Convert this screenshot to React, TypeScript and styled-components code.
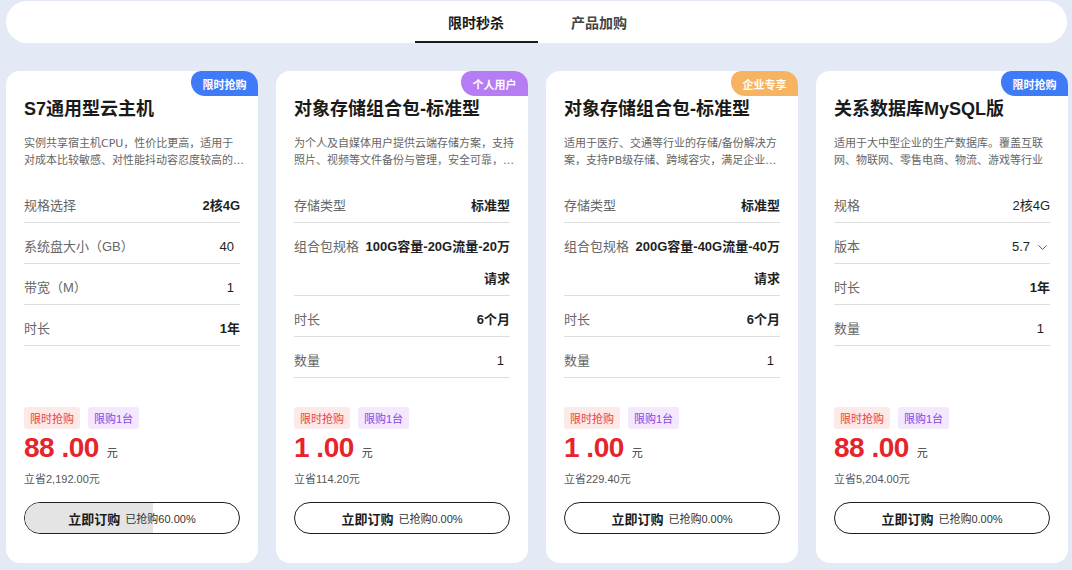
import React, { useState } from 'react'
import styled, { createGlobalStyle } from 'styled-components'
import { ChevronDown } from 'lucide-react'

const GlobalStyle = createGlobalStyle`
  * {
    box-sizing: border-box;
  }
  body {
    margin: 0;
    background: #e3eaf5;
    font-family: 'Liberation Sans', 'Noto Sans CJK SC', sans-serif;
    color: #1a1a1a;
  }
`

type BadgeKind = 'flash' | 'personal' | 'enterprise'

interface Spec {
  label: string
  value: string
  bold?: boolean
  num?: boolean
  select?: boolean
}

interface Product {
  badge: BadgeKind
  title: string
  desc: string
  specs: Spec[]
  price: string
  saved: string
  sold: number
}

const badgeInfo: Record<BadgeKind, { text: string; color: string }> = {
  flash: { text: '限时抢购', color: '#3f7bf7' },
  personal: { text: '个人用户', color: '#b67cf4' },
  enterprise: { text: '企业专享', color: '#f6b462' },
}

const products: Product[] = [
  {
    badge: 'flash',
    title: 'S7通用型云主机',
    desc: '实例共享宿主机CPU，性价比更高，适用于对成本比较敏感、对性能抖动容忍度较高的业务场景，如网站、轻量应用等',
    specs: [
      { label: '规格选择', value: '2核4G', bold: true },
      { label: '系统盘大小（GB）', value: '40', num: true },
      { label: '带宽（M）', value: '1', num: true },
      { label: '时长', value: '1年', bold: true },
    ],
    price: '88',
    saved: '立省2,192.00元',
    sold: 60,
  },
  {
    badge: 'personal',
    title: '对象存储组合包-标准型',
    desc: '为个人及自媒体用户提供云端存储方案，支持照片、视频等文件备份与管理，安全可靠，按需使用',
    specs: [
      { label: '存储类型', value: '标准型', bold: true },
      { label: '组合包规格', value: '100G容量-20G流量-20万请求', bold: true },
      { label: '时长', value: '6个月', bold: true },
      { label: '数量', value: '1', num: true },
    ],
    price: '1',
    saved: '立省114.20元',
    sold: 0,
  },
  {
    badge: 'enterprise',
    title: '对象存储组合包-标准型',
    desc: '适用于医疗、交通等行业的存储/备份解决方案，支持PB级存储、跨域容灾，满足企业级数据安全需求',
    specs: [
      { label: '存储类型', value: '标准型', bold: true },
      { label: '组合包规格', value: '200G容量-40G流量-40万请求', bold: true },
      { label: '时长', value: '6个月', bold: true },
      { label: '数量', value: '1', num: true },
    ],
    price: '1',
    saved: '立省229.40元',
    sold: 0,
  },
  {
    badge: 'flash',
    title: '关系数据库MySQL版',
    desc: '适用于大中型企业的生产数据库。覆盖互联网、物联网、零售电商、物流、游戏等行业',
    specs: [
      { label: '规格', value: '2核4G' },
      { label: '版本', value: '5.7', select: true },
      { label: '时长', value: '1年', bold: true },
      { label: '数量', value: '1', num: true },
    ],
    price: '88',
    saved: '立省5,204.00元',
    sold: 0,
  },
]

const tabs = ['限时秒杀', '产品加购']

const ProductCard = ({ item }: { item: Product }) => {
  const badge = badgeInfo[item.badge]
  return (
    <Card>
      <Badge color={badge.color}>{badge.text}</Badge>
      <Title>{item.title}</Title>
      <Desc>{item.desc}</Desc>
      <SpecList>
        {item.specs.map((spec, index) => (
          <SpecRow key={index}>
            <SpecLabel>{spec.label}</SpecLabel>
            <SpecValue bold={spec.bold} num={spec.num}>
              {spec.value}
              {spec.select && <ChevronDown size={15} color="#555" strokeWidth={1.6} />}
            </SpecValue>
          </SpecRow>
        ))}
      </SpecList>
      <Footer>
        <TagRow>
          <Tag variant="red">限时抢购</Tag>
          <Tag variant="purple">限购1台</Tag>
        </TagRow>
        <PriceRow>
          <Price>{item.price} .00</Price>
          <Unit>元</Unit>
        </PriceRow>
        <Saved>{item.saved}</Saved>
        <BuyButton>
          <Progress style={{ width: `${item.sold}%` }} />
          <BuyText>立即订购</BuyText>
          <SoldText>已抢购{item.sold.toFixed(2)}%</SoldText>
        </BuyButton>
      </Footer>
    </Card>
  )
}

const App = () => {
  const [activeTab, setActiveTab] = useState(0)

  return (
    <>
      <GlobalStyle />
      <Page>
        <TabBar>
          {tabs.map((tab, index) => (
            <TabItem key={tab} active={index === activeTab} onClick={() => setActiveTab(index)}>
              {tab}
            </TabItem>
          ))}
        </TabBar>
        <CardGrid>
          {products.map((item, index) => (
            <ProductCard key={index} item={item} />
          ))}
        </CardGrid>
      </Page>
    </>
  )
}

const Page = styled.div`
  width: 1072px;
  height: 570px;
  padding: 1px 4px 0 6px;
  overflow: hidden;
`
const TabBar = styled.div`
  height: 42px;
  margin-right: 1px;
  background: #fff;
  border-radius: 21px;
  display: flex;
  justify-content: center;
  padding-left: 2px;
`
interface TabProp {
  active: boolean
}
const TabItem = styled.div<TabProp>`
  width: 123px;
  height: 42px;
  display: flex;
  align-items: center;
  justify-content: center;
  padding-top: 2px;
  font-size: 14px;
  font-weight: 700;
  color: ${(props) => (props.active ? '#1a1a1a' : '#444')};
  border-bottom: 2px solid ${(props) => (props.active ? '#1a1a1a' : 'transparent')};
  cursor: pointer;
`
const CardGrid = styled.div`
  margin-top: 28px;
  display: grid;
  grid-template-columns: repeat(4, 252px);
  gap: 18px;
`
const Card = styled.div`
  position: relative;
  height: 492px;
  background: #fff;
  border-radius: 14px;
  padding: 25px 18px 29px;
  display: flex;
  flex-direction: column;
`
const Badge = styled.div<{ color: string }>`
  position: absolute;
  top: 0;
  right: 0;
  width: 67px;
  height: 25px;
  display: flex;
  align-items: center;
  justify-content: center;
  background: ${(props) => props.color};
  color: #fff;
  font-size: 11px;
  font-weight: 700;
  border-radius: 10px 14px 0 14px;
`
const Title = styled.div`
  font-size: 18px;
  line-height: 26px;
  font-weight: 700;
  color: #1a1a1a;
`
const Desc = styled.div`
  margin-top: 13px;
  margin-right: -4.2px;
  font-family: 'DejaVu Sans', 'Noto Sans CJK SC', sans-serif;
  font-size: 11px;
  line-height: 17px;
  color: #666;
  display: -webkit-box;
  -webkit-line-clamp: 2;
  -webkit-box-orient: vertical;
  overflow: hidden;
`
const SpecList = styled.div`
  margin-top: 13px;
`
const SpecRow = styled.div`
  display: flex;
  justify-content: space-between;
  gap: 4px;
  padding: 8px 0 0;
  line-height: 32px;
  font-size: 13px;
  border-bottom: 1px solid #dedede;
`
const SpecLabel = styled.span`
  flex-shrink: 0;
  color: #666;
`
interface ValueProp {
  bold?: boolean
  num?: boolean
}
const SpecValue = styled.span<ValueProp>`
  flex: 1;
  display: flex;
  align-items: center;
  justify-content: flex-end;
  flex-wrap: wrap;
  gap: 5px;
  text-align: right;
  color: #1f1f1f;
  font-weight: ${(props) => (props.bold ? 700 : 400)};
  padding-right: ${(props) => (props.num ? '6px' : '0')};
`
const Footer = styled.div`
  margin-top: auto;
  display: flex;
  flex-direction: column;
`
const TagRow = styled.div`
  display: flex;
  gap: 8px;
`
interface TagProp {
  variant: 'red' | 'purple'
}
const Tag = styled.span<TagProp>`
  height: 22px;
  padding: 0 6px;
  display: flex;
  align-items: center;
  font-size: 11px;
  border-radius: 3px;
  color: ${(props) => (props.variant === 'red' ? '#e9443e' : '#8747e3')};
  background: ${(props) => (props.variant === 'red' ? '#fde9e7' : '#f3e8fe')};
`
const PriceRow = styled.div`
  margin-top: 2px;
  display: flex;
  align-items: baseline;
  gap: 8px;
  height: 34px;
`
const Price = styled.span`
  font-size: 28px;
  line-height: 34px;
  font-weight: 700;
  color: #e6242b;
  letter-spacing: -0.5px;
`
const Unit = styled.span`
  font-size: 11px;
  color: #333;
`
const Saved = styled.div`
  margin-top: 6px;
  font-size: 11px;
  line-height: 16px;
  color: #555;
`
const BuyButton = styled.button`
  position: relative;
  margin-top: 15px;
  height: 32px;
  width: 100%;
  border: 1px solid #1f1f1f;
  border-radius: 16px;
  background: #fff;
  overflow: hidden;
  display: flex;
  align-items: center;
  justify-content: center;
  gap: 5px;
  font-family: inherit;
  cursor: pointer;
  padding: 0;
`
const Progress = styled.div`
  position: absolute;
  left: 0;
  top: 0;
  bottom: 0;
  background: #e4e4e4;
`
const BuyText = styled.span`
  position: relative;
  font-size: 13px;
  font-weight: 700;
  color: #1a1a1a;
`
const SoldText = styled.span`
  position: relative;
  font-size: 11px;
  color: #333;
`

export default App
